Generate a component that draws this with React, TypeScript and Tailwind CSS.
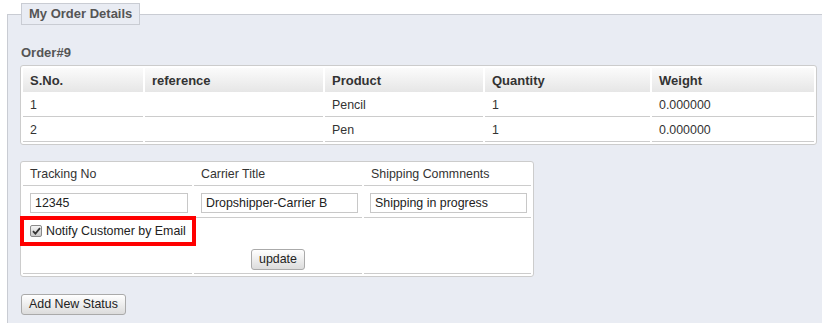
import React from 'react';

const orderRows = [
  { sno: '1', reference: '', product: 'Pencil', quantity: '1', weight: '0.000000' },
  { sno: '2', reference: '', product: 'Pen', quantity: '1', weight: '0.000000' },
];

const CheckMark: React.FC = () => (
  <span className="inline-flex h-[12px] w-[12px] shrink-0 items-center justify-center rounded-[2px] border border-[#8a8a8a] bg-linear-to-b from-[#f4f4f4] to-[#c9c9c9]">
    <svg width="9" height="8" viewBox="0 0 9 8">
      <path d="M1 4.2 L3.4 6.6 L8 1.2" fill="none" stroke="#333" strokeWidth="1.8" />
    </svg>
  </span>
);

const App: React.FC = () => {
  return (
    <div className="h-[323px] w-[822px] overflow-hidden bg-white font-['Liberation_Sans',Arial,sans-serif] text-[13px] text-[#333]">
      <fieldset className="ml-[7px] mt-[3px] min-h-[330px] border-l border-t border-[#c9ccd3] bg-[#e9ecf3] pl-[12px] pt-[20px]">
        <legend className="ml-px h-[22px] border border-[#c9ccd3] bg-[#e9ecf3] px-[7px] text-[13px] leading-[20px] font-bold text-[#555]">
          My Order Details
        </legend>

        <div className="mb-[5px] ml-px h-[15px] leading-[15px] font-bold text-[#555]">Order#9</div>

        <table className="w-[797px] table-fixed border-separate border-spacing-[2px] rounded-[3px] border border-[#ccc] bg-white leading-[15px]">
          <colgroup>
            <col className="w-[120px]" />
            <col className="w-[178px]" />
            <col className="w-[158px]" />
            <col className="w-[165px]" />
            <col className="w-[162px]" />
          </colgroup>
          <thead>
            <tr>
              {['S.No.', 'reference', 'Product', 'Quantity', 'Weight'].map((h) => (
                <th key={h} className="bg-linear-to-b from-[#fbfbfb] to-[#e6e6e6] p-0 text-left font-bold text-[#333]">
                  <div className="flex h-[24px] items-center px-[7px]">{h}</div>
                </th>
              ))}
            </tr>
          </thead>
          <tbody className="text-[12.4px]">
            {orderRows.map((row) => (
              <tr key={row.sno}>
                {[row.sno, row.reference, row.product, row.quantity, row.weight].map((v, i) => (
                  <td key={i} className="border-b border-[#ccc] p-0">
                    <div className="flex h-[22px] items-center px-[7px]">{v}</div>
                  </td>
                ))}
              </tr>
            ))}
          </tbody>
        </table>

        <table className="mt-[16px] w-[514px] table-fixed border-separate border-spacing-[2px] rounded-[3px] border border-[#ccc] bg-white text-[12.4px] leading-[15px]">
          <colgroup>
            <col className="w-[169px]" />
            <col className="w-[168px]" />
            <col className="w-[167px]" />
          </colgroup>
          <tbody>
            <tr>
              {['Tracking No', 'Carrier Title', 'Shipping Commnents'].map((h) => (
                <td key={h} className="border-b border-[#ccc] p-0">
                  <div className="flex h-[21px] items-center px-[7px]">{h}</div>
                </td>
              ))}
            </tr>
            <tr>
              <td className="border-b border-[#ccc] p-0">
                <div className="flex h-[29px] items-center px-[7px]">
                  <input
                    defaultValue="12345"
                    className="block h-[20px] w-[158px] border border-[#c8c8c8] bg-white px-[4px] text-[12.4px] text-[#222] outline-none"
                  />
                </div>
              </td>
              <td className="border-b border-[#ccc] p-0">
                <div className="flex h-[29px] items-center px-[7px]">
                  <input
                    defaultValue="Dropshipper-Carrier B"
                    className="block h-[20px] w-[157px] border border-[#c8c8c8] bg-white px-[4px] text-[12.4px] text-[#222] outline-none"
                  />
                </div>
              </td>
              <td className="border-b border-[#ccc] p-0">
                <div className="flex h-[29px] items-center px-[6px]">
                  <input
                    defaultValue="Shipping in progress"
                    className="block h-[20px] w-[157px] border border-[#c8c8c8] bg-white px-[4px] text-[12.4px] text-[#222] outline-none"
                  />
                </div>
              </td>
            </tr>
            <tr>
              <td className="relative whitespace-nowrap border-b border-[#ccc] p-0">
                <label className="flex h-[22px] items-center gap-[4px] pl-[7px] text-[#222]">
                  <CheckMark />
                  <span>Notify Customer by Email</span>
                </label>
                <div className="absolute -bottom-[4px] -left-[3px] -right-[4px] -top-[4px] border-4 border-[#ff0000]" />
              </td>
              <td className="p-0"></td>
              <td className="p-0"></td>
            </tr>
            <tr>
              <td className="border-b border-[#ccc] p-0">
                <div className="h-[28px]" />
              </td>
              <td className="border-b border-[#ccc] p-0">
                <div className="flex h-[28px] items-center justify-center">
                  <button className="h-[21px] rounded-[3px] border border-[#aaa] bg-linear-to-b from-white to-[#dcdcdc] px-[7px] text-[12.4px] text-[#222]">
                    update
                  </button>
                </div>
              </td>
              <td className="border-b border-[#ccc] p-0"></td>
            </tr>
          </tbody>
        </table>

        <button className="ml-px mt-[17px] h-[21px] rounded-[3px] border border-[#aaa] bg-linear-to-b from-white to-[#dcdcdc] px-[7px] text-[12.4px] text-[#222]">
          Add New Status
        </button>
      </fieldset>
    </div>
  );
};

export default App;
